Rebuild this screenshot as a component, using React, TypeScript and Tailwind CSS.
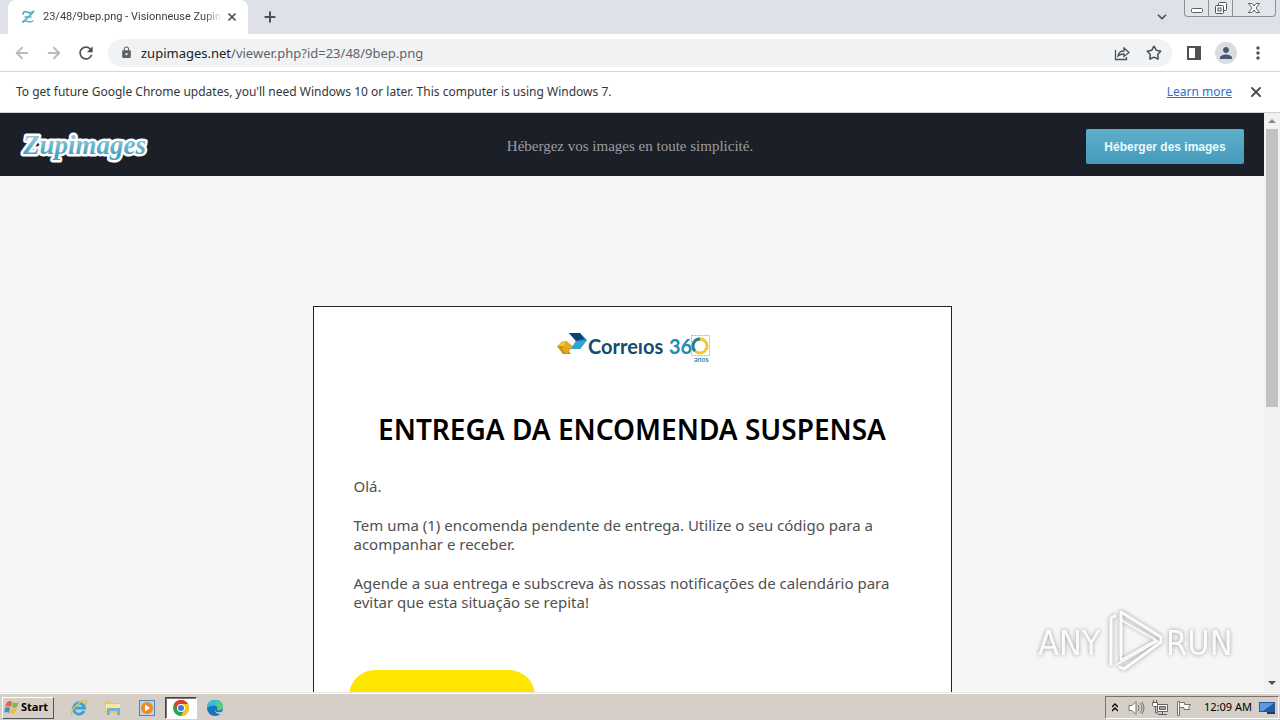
import type { ReactNode } from "react";
import { ArrowLeft, ArrowRight, ChevronDown, Plus, Star, X } from "lucide-react";
import { MdLock, MdMoreVert, MdPerson, MdRefresh } from "react-icons/md";

function IconButton({
  label,
  className = "",
  children,
}: {
  label: string;
  className?: string;
  children: ReactNode;
}) {
  return (
    <button
      aria-label={label}
      className={`flex h-6 shrink-0 items-center justify-center text-[#4d5156] ${className}`}
    >
      {children}
    </button>
  );
}

function WindowControls() {
  return (
    <div className="mr-1 flex h-[17px] overflow-hidden rounded-b border border-t-0 border-[#8d9097] bg-[#e2e5ea]">
      <button aria-label="Minimize" className="flex w-6 justify-center border-r border-[#8d9097]">
        <svg width="14" height="16" fill="none" stroke="#5b5f66">
          <rect x="1.5" y="8.5" width="11" height="4" rx="1" fill="#fff" />
        </svg>
      </button>
      <button aria-label="Restore" className="flex w-6 justify-center border-r border-[#8d9097]">
        <svg width="14" height="16" fill="none" stroke="#4c5057">
          <rect x="4.5" y="2.5" width="8" height="8" rx="1" fill="#fff" />
          <rect x="1.5" y="5.5" width="8" height="8" rx="1" fill="#fff" />
          <rect x="4" y="8" width="3" height="3" />
        </svg>
      </button>
      <button aria-label="Close window" className="flex w-[42px] justify-center">
        <svg width="14" height="16" fill="#fff" stroke="#5b5f66">
          <path d="M1.5 3.5H5l2 2.500 2-2.500h3.500L9 8l3.500 4.500H9L7 10l-2 2.500H1.500L5 8z" />
        </svg>
      </button>
    </div>
  );
}

function TabStrip() {
  return (
    <div className="flex h-[34px] shrink-0 bg-[#dee1e8]">
      <div className="ml-2 flex h-[34px] w-[240px] items-center rounded-t-lg bg-white pr-[6px] pl-[14px]">
        <svg width="13" height="14" viewBox="0 0 13 14" fill="none" stroke="#55b3cb" strokeLinecap="round">
          <path d="M1 4C1 2 3 1 5 2s5 1 7-1C9 5 5 8 1 12" strokeWidth="1.800" />
          <path d="M3 7h6M1 12c3-3 6 2 10-1" strokeWidth="1.500" />
        </svg>
        <span className="ml-2 flex-1 overflow-hidden mask-r-from-90% font-['Roboto',sans-serif] text-[11px] leading-4 whitespace-nowrap text-[#3c4043]">
          23/48/9bep.png - Visionneuse Zupim
        </span>
        <IconButton label="Close tab" className="w-5">
          <X size={12} strokeWidth={3.5} />
        </IconButton>
      </div>
      <IconButton label="New tab" className="mt-[5px] ml-[10px] w-6">
        <Plus size={16} strokeWidth={3} />
      </IconButton>
      <div className="ml-auto flex">
        <IconButton label="Search tabs" className="mt-[5px] mr-[10px] w-6">
          <ChevronDown size={14} strokeWidth={3} />
        </IconButton>
        <WindowControls />
      </div>
    </div>
  );
}

function Toolbar() {
  return (
    <div className="flex h-[38px] shrink-0 items-center border-b border-[#d5d7da] bg-white pr-[10px] pl-2">
      <IconButton label="Back" className="w-7">
        <ArrowLeft size={18} strokeWidth={2.4} color="#b9bbbe" />
      </IconButton>
      <IconButton label="Forward" className="ml-1 w-7">
        <ArrowRight size={18} strokeWidth={2.4} color="#b9bbbe" />
      </IconButton>
      <IconButton label="Reload" className="ml-1 w-7">
        <MdRefresh size={20} />
      </IconButton>
      <div className="ml-2 flex h-7 flex-1 items-center rounded-full bg-[#f0f2f4] pr-[6px] pl-3">
        <MdLock size={13} color="#5f6368" />
        <div className="relative ml-2 flex-1">
          <input
            aria-label="Address"
            defaultValue="zupimages.net/viewer.php?id=23/48/9bep.png"
            className="block h-5 w-full bg-transparent text-[13px] text-transparent outline-none"
          />
          <div
            aria-hidden="true"
            className="pointer-events-none absolute inset-0 text-[13px] leading-5 text-[#60646a]"
          >
            <span className="text-[#202124]">zupimages.net</span>/viewer.php?id=23/48/9bep.png
          </div>
        </div>
        <IconButton label="Share this page" className="mr-2 w-6">
          <svg width="16" height="16" viewBox="0 0 16 16" fill="none" stroke="currentColor" strokeWidth="1.300">
            <path d="M1.500 5v9.500h11V12M4 11c.5-3.500 3-5 6-5V3l5 4.500-5 4V9c-3 0-4.500.5-6 2z" />
          </svg>
        </IconButton>
        <IconButton label="Bookmark this page" className="w-6">
          <Star size={16} strokeWidth={2.3} />
        </IconButton>
      </div>
      <IconButton label="Side panel" className="ml-[10px] w-6">
        <svg width="14" height="14" viewBox="0 0 14 14">
          <path fill="currentColor" fillRule="evenodd" d="M0 0h14v14H0zM2 2v10h6V2z" />
        </svg>
      </IconButton>
      <IconButton label="Profile" className="ml-2 w-6">
        <span className="flex size-[22px] items-center justify-center rounded-full bg-[#d9dce1] text-[#4a5878]">
          <MdPerson size={18} />
        </span>
      </IconButton>
      <IconButton label="Menu" className="ml-2 w-6">
        <MdMoreVert size={20} />
      </IconButton>
    </div>
  );
}

function UpdateNotice() {
  return (
    <div className="flex h-[41px] shrink-0 items-center border-b border-[#ccd2d6] bg-white pr-[14px] pl-4 text-xs text-[#333639]">
      <p>
        To get future Google Chrome updates, you'll need Windows 10 or later. This computer is using Windows 7.
      </p>
      <a href="#learn-more" className="ml-auto text-[#2f6fd0] underline">
        Learn more
      </a>
      <IconButton label="Dismiss" className="ml-[14px] w-5">
        <X size={16} strokeWidth={3} />
      </IconButton>
    </div>
  );
}

function ZupimagesLogo() {
  return (
    <svg width="136" height="44" viewBox="0 0 136 44" role="img" aria-label="Zupimages">
      <defs>
        <linearGradient id="zup" x1="0" y1="0" x2="0" y2="1">
          <stop offset="0.300" stopColor="#8ec4d6" />
          <stop offset="0.800" stopColor="#46a3bf" />
        </linearGradient>
      </defs>
      <text
        x="7"
        y="29"
        fontFamily="'Liberation Serif', serif"
        fontStyle="italic"
        fontWeight="bold"
        fontSize="27"
        fill="url(#zup)"
        stroke="#fff"
        strokeWidth="5"
        strokeLinejoin="round"
        paintOrder="stroke"
      >
        Zupimages
      </text>
    </svg>
  );
}

function SiteHeader() {
  return (
    <header className="flex h-[63px] items-center justify-between bg-[#1b2028] pt-1 pr-5 pl-4">
      <div className="flex-1">
        <ZupimagesLogo />
      </div>
      <p className="font-['Liberation_Serif',serif] text-[15px] text-[#9b9da0]">
        Hébergez vos images en toute simplicité.
      </p>
      <div className="flex flex-1 justify-end">
        <button className="h-[35px] w-[158px] rounded-xs bg-linear-to-b from-[#5fafcb] to-[#449bbb] font-['Liberation_Sans',sans-serif] text-xs font-bold text-[#e9fbff]">
          Héberger des images
        </button>
      </div>
    </header>
  );
}

function CorreiosLogo() {
  return (
    <svg width="156" height="34" viewBox="0 0 156 34" role="img" aria-label="Correios 360 anos" className="mx-auto">
      <path fill="#f6c52e" d="M6 10h6l-3 6 6 7H7l-6-8z" />
      <path fill="#c8911b" d="M1 15h7l7 8H7z" />
      <path fill="#e4a922" d="M10 10l7 5-6 8-5-4z" />
      <path fill="#1183bd" d="M13 2h11l7 7-7 9h-9l5-8z" />
      <path fill="#0a4474" d="M13 2h11l4 6-8 2z" />
      <path fill="#30a5cf" d="M20 10l11-1-7 9h-9z" />
      <g fontFamily="Lato, sans-serif">
        <text x="32" y="23" fontSize="20" fontWeight="bold" fill="#164b70">
          Correıos
        </text>
        <text x="113" y="23" fontSize="20" fontWeight="bold" fill="#218bad">
          36
        </text>
        <text x="138" y="31" fontSize="7" fontWeight="bold" fill="#2891b2">
          anos
        </text>
      </g>
      <circle cx="144" cy="15" r="7" fill="none" stroke="#f6c52e" strokeWidth="3" />
      <path d="M144 8a7 7 0 0 0-5 12" fill="none" stroke="#1784a8" strokeWidth="3" />
      <rect x="135.500" y="4.500" width="18" height="20" fill="none" stroke="#e1ad59" strokeDasharray="2 1" />
    </svg>
  );
}

function DeliveryCard() {
  return (
    <article className="mx-auto mt-[130px] w-full max-w-[639px] border border-[#222] bg-white px-10 pt-6 pb-20 text-[#505050]">
      <div className="pl-1">
        <CorreiosLogo />
      </div>
      <h1 className="mt-11 text-center text-[28px] leading-[40px] font-semibold whitespace-nowrap text-black">
        ENTREGA DA ENCOMENDA SUSPENSA
      </h1>
      <div className="mt-7 flex flex-col gap-5 text-[15px] leading-[19px] whitespace-nowrap">
        <p>Olá.</p>
        <p>
          Tem uma (1) encomenda pendente de entrega. Utilize o seu código para a
          <br />
          acompanhar e receber.
        </p>
        <p>
          Agende a sua entrega e subscreva às nossas notificações de calendário para
          <br />
          evitar que esta situação se repita!
        </p>
      </div>
      <button
        aria-label="Agende a sua entrega"
        className="mt-[58px] -ml-[5px] block h-[52px] w-[186px] rounded-full bg-[#ffe600]"
      />
    </article>
  );
}

function ScrollBar() {
  return (
    <div className="flex w-4 shrink-0 flex-col items-center bg-[#f1f1f1]">
      <button aria-label="Scroll up" className="flex h-4 w-4 items-center justify-center">
        <svg width="8" height="4">
          <path fill="#8b8b8b" d="M0 4l4-4 4 4z" />
        </svg>
      </button>
      <div className="h-[48%] w-3 bg-[#c1c1c1]" />
      <button aria-label="Scroll down" className="mt-auto flex h-[18px] w-4 items-center justify-center">
        <svg width="8" height="4">
          <path fill="#505050" d="M0 0l4 4 4-4z" />
        </svg>
      </button>
    </div>
  );
}

function Watermark() {
  return (
    <svg
      width="204"
      height="72"
      viewBox="0 0 204 72"
      role="img"
      aria-label="ANY RUN"
      className="pointer-events-none absolute right-[43px] bottom-4 drop-shadow-[0_0_2px_#999]"
    >
      <g fontFamily="'DejaVu Sans Condensed', 'DejaVu Sans', sans-serif" fontSize="34" fill="#fbfbfb">
        <text x="5" y="51">
          ANY
        </text>
        <text x="133" y="51">
          RUN
        </text>
      </g>
      <g fill="none" stroke="#fcfcfc" strokeWidth="3" strokeLinejoin="round" strokeLinecap="round">
        <path d="M78 60V14l4-2M88 50V8l40 25v5L91 65l-4-2" />
        <path d="M88 16l35 20-35 20zM85 60l40-23" strokeWidth="2" />
      </g>
    </svg>
  );
}

function StartFlag() {
  return (
    <svg width="16" height="15" viewBox="0 0 16 15">
      <path fill="#e7653b" d="M3 2q3-2 5 0L7 7Q4 5 1 7z" />
      <path fill="#82b84a" d="M9 2q3 2 6 0l-2 5q-3 2-5 0z" />
      <path fill="#4a8ed0" d="M1 8q3-2 5 0l-1 5q-3-2-5 0z" />
      <path fill="#f0bf36" d="M7 8q3 2 6 0l-2 5q-3 2-5 0z" />
    </svg>
  );
}

function TaskBar() {
  return (
    <footer className="flex h-7 shrink-0 items-center border-t border-[#e8e5de] bg-[#d6cfc7] pt-[2px] pl-[2px] text-[11px] text-black shadow-[inset_0_1px_0_#fff]">
      <button className="flex h-[22px] w-[52px] items-center gap-px border border-t-white border-r-[#555] border-b-[#555] border-l-white pl-px font-bold">
        <StartFlag />
        Start
      </button>
      <div className="ml-[9px] flex items-center gap-[2px]">
        <button aria-label="Internet Explorer" className="flex h-[22px] w-8 items-center justify-center">
          <svg width="18" height="18" viewBox="0 0 18 18" fill="none">
            <path d="M14 12a5.500 5.500 0 1 1 .5-3H5" stroke="#36a3dc" strokeWidth="3" />
            <path d="M2 16C-1 12 11 0 16 2c1 1 0 3-1 4" stroke="#e8bd45" strokeWidth="1.400" />
          </svg>
        </button>
        <button aria-label="Explorer" className="flex h-[22px] w-8 items-center justify-center">
          <svg width="18" height="17" viewBox="0 0 18 17">
            <path fill="#e5c964" d="M1 2h6l1 2h8v10H1z" />
            <path fill="#f8e8a0" d="M2 5h14v6H2z" />
            <path fill="#6bb5d9" d="M3 9h13v7h-3v-4H6v4H3z" />
          </svg>
        </button>
        <button aria-label="Media Player" className="flex h-[22px] w-8 items-center justify-center">
          <svg width="16" height="16" viewBox="0 0 16 16">
            <rect x="0.500" y="0.500" width="15" height="15" fill="#b8d4ea" stroke="#5388b8" />
            <circle cx="8" cy="8" r="6" fill="#f08a1c" />
            <path fill="#fff" d="M6 4.500l5 3.500-5 3.500z" />
          </svg>
        </button>
        <button
          aria-label="Chrome"
          className="flex h-[22px] w-8 items-center justify-center border border-t-[#444] border-r-white border-b-white border-l-[#444] bg-white shadow-[inset_1px_1px_0_#777]"
        >
          <svg width="16" height="16" viewBox="0 0 16 16">
            <circle cx="8" cy="8" r="8" fill="#2ba24c" />
            <path fill="#e33b2e" d="M1.100 4A8 8 0 0 1 15 4H8L5 10z" />
            <path fill="#fcc31e" d="M15 4a8 8 0 0 1-7 12l4-8-4-4z" />
            <circle cx="8" cy="8" r="4" fill="#fff" />
            <circle cx="8" cy="8" r="3" fill="#3b78e7" />
          </svg>
        </button>
        <button aria-label="Edge" className="flex h-[22px] w-8 items-center justify-center">
          <svg width="16" height="16" viewBox="0 0 16 16">
            <circle cx="8" cy="8" r="8" fill="#1673bd" />
            <path fill="#35bfd0" d="M0 8a8 8 0 0 1 16-1c0 3-3 4-6 3 2-5-5-6-10-2z" />
            <path fill="#5fcf73" d="M10 1q6 2 6 7-2 3-6 2 2-4-1-6z" />
            <path fill="#d6cfc7" d="M8 8q-1 5 6 4l1-1-1 3q-7 0-6-6z" />
          </svg>
        </button>
      </div>
      <div className="mr-px ml-auto flex h-[23px] items-center border border-t-[#77736d] border-r-white border-b-white border-l-[#77736d] pr-[2px] pl-[6px]">
        <svg width="6" height="9" viewBox="0 0 6 9" fill="none" stroke="#000" strokeWidth="1.300">
          <path d="M0 4l3-3 3 3M0 8l3-3 3 3" />
        </svg>
        <svg width="17" height="16" viewBox="0 0 17 16" fill="none" stroke="#75736f" className="ml-[10px]">
          <path fill="#fff" d="M1 5.500h3l4-4v13l-4-4H1z" />
          <path d="M10 5q2 3 0 6M12 3q4 5 0 10M14 2q4 6 0 12" />
        </svg>
        <svg width="17" height="16" viewBox="0 0 17 16" fill="none" stroke="#625f5b" className="ml-[7px]">
          <path fill="#fff" d="M5.500 4.500h10v7h-10z" />
          <path fill="#a9a7a5" d="M7.500 6.500h6v3h-6z" />
          <path d="M6 14.500h9M10.500 12v2M3.500 6v7h3" />
          <path fill="#fff" d="M.5 2.500h5v3l-1 1h-3l-1-1zM1.500 0v2M4.500 0v2" />
        </svg>
        <svg width="16" height="16" viewBox="0 0 16 16" fill="#fff" stroke="#75736f" className="ml-[7px]">
          <path d="M1.500 15.500v-14h2v14zM3.500 2.500h5v2h6l-2 3 1 2H8v-2H3.500z" />
        </svg>
        <span className="ml-3 whitespace-nowrap">12:09 AM</span>
        <svg width="17" height="14" viewBox="0 0 17 14" className="ml-[7px]">
          <path fill="#2758a3" d="M0 1h16v10H0z" />
          <path fill="#5b9ae0" d="M1 2h14L4 10H1z" />
          <path fill="#1d3b6b" d="M8 11h8v2H8z" />
        </svg>
      </div>
    </footer>
  );
}

export default function App() {
  return (
    <div className="flex h-screen flex-col overflow-hidden bg-[#f6f6f6] font-['Noto_Sans',sans-serif]">
      <TabStrip />
      <Toolbar />
      <UpdateNotice />
      <div className="relative flex min-h-0 flex-1">
        <main className="min-w-0 flex-1 overflow-hidden">
          <SiteHeader />
          <DeliveryCard />
        </main>
        <ScrollBar />
        <Watermark />
      </div>
      <TaskBar />
    </div>
  );
}
